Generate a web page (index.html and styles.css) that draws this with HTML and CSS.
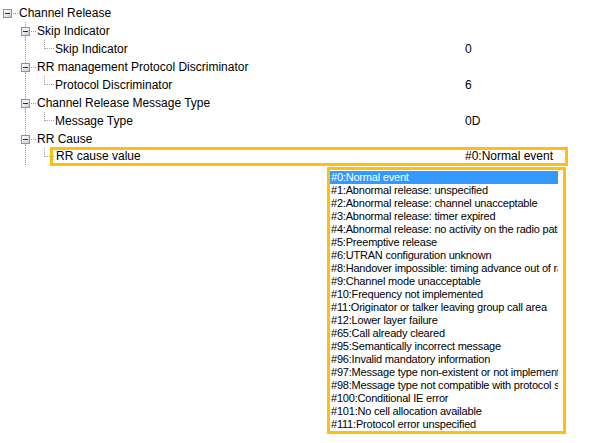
FILE: index.html
```html
<!DOCTYPE html>
<html>
<head>
<meta charset="utf-8">
<link rel="stylesheet" href="styles.css">
</head>
<body>
<div class="tree">
  <div class="row">
    <div class="cell boxcell"><div class="seg"></div><div class="mid"><span class="pad"></span><span class="xbox"><span class="minus"></span></span><span class="hline"></span></div><div class="seg"></div></div>
    <div class="label">Channel Release</div>
    <div class="value"></div>
  </div>
  <div class="row">
    <div class="cell"></div>
    <div class="cell boxcell"><div class="seg v"></div><div class="mid"><span class="pad"></span><span class="xbox"><span class="minus"></span></span><span class="hline"></span></div><div class="seg v"></div></div>
    <div class="label">Skip Indicator</div>
    <div class="value"></div>
  </div>
  <div class="row">
    <div class="cell"></div>
    <div class="cell pipe"></div>
    <div class="cell elbow"><div class="q tl"></div><div class="q tr"></div><div class="q bl"></div><div class="q br"></div></div>
    <div class="label">Skip Indicator</div>
    <div class="value">0</div>
  </div>
  <div class="row">
    <div class="cell"></div>
    <div class="cell boxcell"><div class="seg v"></div><div class="mid"><span class="pad"></span><span class="xbox"><span class="minus"></span></span><span class="hline"></span></div><div class="seg v"></div></div>
    <div class="label">RR management Protocol Discriminator</div>
    <div class="value"></div>
  </div>
  <div class="row">
    <div class="cell"></div>
    <div class="cell pipe"></div>
    <div class="cell elbow"><div class="q tl"></div><div class="q tr"></div><div class="q bl"></div><div class="q br"></div></div>
    <div class="label">Protocol Discriminator</div>
    <div class="value">6</div>
  </div>
  <div class="row">
    <div class="cell"></div>
    <div class="cell boxcell"><div class="seg v"></div><div class="mid"><span class="pad"></span><span class="xbox"><span class="minus"></span></span><span class="hline"></span></div><div class="seg v"></div></div>
    <div class="label">Channel Release Message Type</div>
    <div class="value"></div>
  </div>
  <div class="row">
    <div class="cell"></div>
    <div class="cell pipe"></div>
    <div class="cell elbow"><div class="q tl"></div><div class="q tr"></div><div class="q bl"></div><div class="q br"></div></div>
    <div class="label">Message Type</div>
    <div class="value">0D</div>
  </div>
  <div class="row">
    <div class="cell"></div>
    <div class="cell boxcell"><div class="seg v"></div><div class="mid"><span class="pad"></span><span class="xbox"><span class="minus"></span></span><span class="hline"></span></div><div class="seg v"></div></div>
    <div class="label">RR Cause</div>
    <div class="value"></div>
  </div>
  <div class="row">
    <div class="cell"></div>
    <div class="cell pipe"></div>
    <div class="cell elbow"><div class="q tl"></div><div class="q tr"></div><div class="q bl"></div><div class="q br"></div></div>
    <div class="selected">
      <div class="label">RR cause value</div>
      <div class="value sel-value">#0:Normal event</div>
    </div>
  </div>
</div>
<div class="dropdown">
  <ul class="list">
    <li class="item active">#0:Normal event</li>
    <li class="item">#1:Abnormal release: unspecified</li>
    <li class="item">#2:Abnormal release: channel unacceptable</li>
    <li class="item">#3:Abnormal release: timer expired</li>
    <li class="item">#4:Abnormal release: no activity on the radio path</li>
    <li class="item">#5:Preemptive release</li>
    <li class="item">#6:UTRAN configuration unknown</li>
    <li class="item">#8:Handover impossible: timing advance out of range</li>
    <li class="item">#9:Channel mode unacceptable</li>
    <li class="item">#10:Frequency not implemented</li>
    <li class="item">#11:Originator or talker leaving group call area</li>
    <li class="item">#12:Lower layer failure</li>
    <li class="item">#65:Call already cleared</li>
    <li class="item">#95:Semantically incorrect message</li>
    <li class="item">#96:Invalid mandatory information</li>
    <li class="item">#97:Message type non-existent or not implemented</li>
    <li class="item">#98:Message type not compatible with protocol state</li>
    <li class="item">#100:Conditional IE error</li>
    <li class="item">#101:No cell allocation available</li>
    <li class="item">#111:Protocol error unspecified</li>
  </ul>
</div>
</body>
</html>
```

FILE: styles.css
```css
html, body {
  margin: 0;
  padding: 0;
  background: #ffffff;
}
body {
  width: 589px;
  height: 443px;
  overflow: hidden;
  font-family: "Liberation Sans", Arial, sans-serif;
  color: #000;
}
.tree {
  width: 568px;
  padding-top: 4px;
  font-size: 12px;
}
.row {
  display: flex;
  height: 18px;
  align-items: stretch;
}
.cell {
  width: 18px;
  flex: 0 0 18px;
  height: 18px;
}
.boxcell {
  display: flex;
  flex-direction: column;
}
.boxcell .seg {
  flex: 1;
  margin-left: 7px;
  width: 1px;
}
.boxcell .seg.v {
  border-left: 1px dotted #a0a0a0;
}
.boxcell .mid {
  display: flex;
  align-items: center;
  height: 9px;
}
.pad {
  width: 3px;
  flex: 0 0 3px;
}
.xbox {
  box-sizing: border-box;
  width: 9px;
  height: 9px;
  flex: 0 0 9px;
  border: 1px solid #8e8fb3;
  background: linear-gradient(135deg, #ffffff 0%, #e6e6f0 55%, #c4c4dc 100%);
  display: flex;
  align-items: center;
  justify-content: center;
}
.minus {
  width: 5px;
  height: 1px;
  background: #25256a;
}
.hline {
  flex: 1;
  height: 0;
  border-top: 1px dotted #a0a0a0;
  margin-left: 1px;
  margin-top: 1px;
}
.pipe {
  box-sizing: border-box;
  margin-left: 0;
  background: linear-gradient(#a0a0a0 50%, transparent 50%) 7px 0 / 1px 2px repeat-y;
}
.elbow {
  display: grid;
  grid-template-columns: 8px 10px;
  grid-template-rows: 9px 9px;
}
.q {
  box-sizing: border-box;
}
.tr {
  border-left: 1px dotted #a0a0a0;
  border-bottom: 1px dotted #a0a0a0;
}
.label {
  flex: 1;
  padding-left: 1px;
  line-height: 18px;
  white-space: nowrap;
  overflow: hidden;
}
.value {
  width: 103px;
  flex: 0 0 103px;
  line-height: 18px;
  white-space: nowrap;
}
.selected {
  flex: 1;
  display: flex;
  box-sizing: border-box;
  height: 19px;
  margin-left: -4px;
  margin-top: -1px;
  border: 3px solid #fdc010;
}
.selected .label {
  padding-left: 3px;
  line-height: 13px;
}
.selected .value {
  width: 100px;
  flex: 0 0 100px;
  line-height: 13px;
}
.dropdown {
  box-sizing: border-box;
  margin-left: 327px;
  margin-top: 1px;
  width: 239px;
  height: 267px;
  border: 3px solid #fdc010;
  background: #ffffff;
  padding: 1px 0 0 0;
}
.list {
  list-style: none;
  margin: 0;
  padding: 0;
  width: 228px;
  overflow: hidden;
}
.item {
  height: 13px;
  line-height: 13px;
  font-size: 11px;
  letter-spacing: -0.2px;
  white-space: nowrap;
  overflow: hidden;
  padding-left: 1px;
}
.item.active {
  background: #3399ff;
  color: #ffffff;
}
```
